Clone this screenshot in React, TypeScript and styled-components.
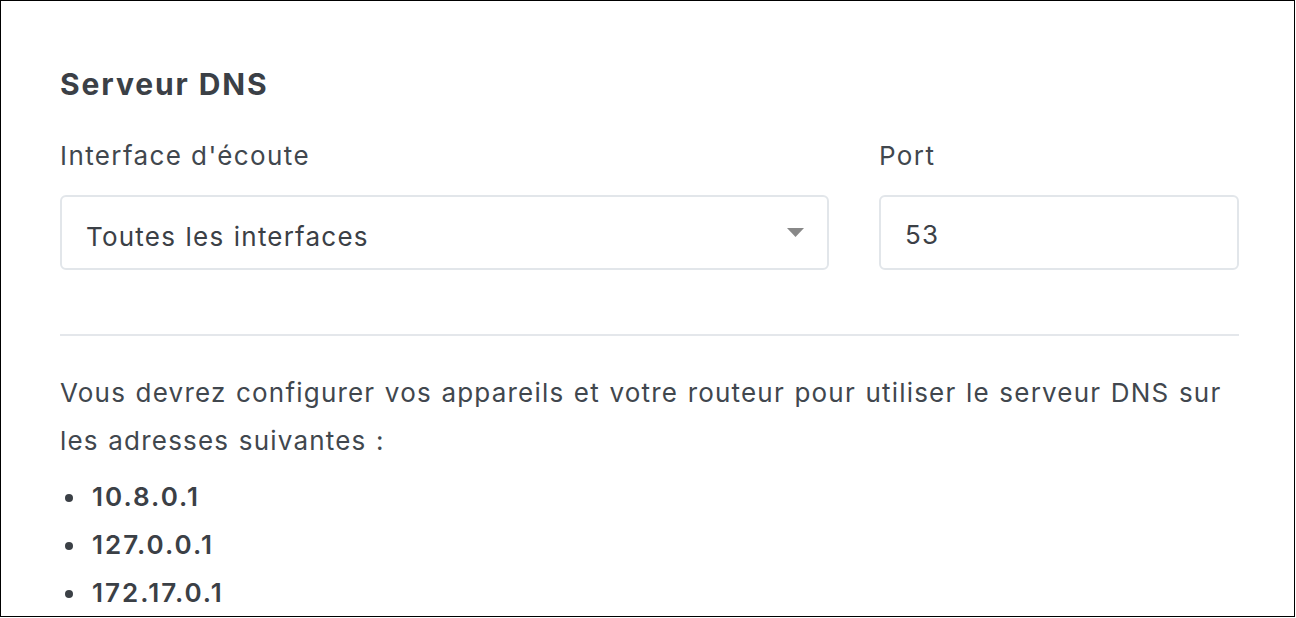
import React from "react";
import styled, { createGlobalStyle } from "styled-components";

const GlobalStyle = createGlobalStyle`
  html, body { margin: 0; padding: 0; background: #ffffff; }
  body { font-family: Inter, "Noto Sans", "Liberation Sans", sans-serif; }
  * { box-sizing: border-box; }
`;

const Frame = styled.div`
  width: 1295px;
  height: 617px;
  border: 1px solid #000000;
  background: #ffffff;
  overflow: hidden;
  padding: 65px 0 0 59px;
`;

const Section = styled.section`
  width: 1179px;
  color: #3f454c;
`;

const Title = styled.h2`
  margin: 0 0 36px;
  font-size: 30px;
  line-height: 36px;
  font-weight: 700;
  letter-spacing: 1.9px;
  color: #3b4046;
`;

const FieldRow = styled.div`
  display: flex;
  gap: 50px;
`;

const Field = styled.div<{ $width: number }>`
  width: ${(p) => p.$width}px;
  display: flex;
  flex-direction: column;
  gap: 21px;
`;

const Label = styled.label`
  font-size: 26px;
  line-height: 36px;
  letter-spacing: 1.4px;
  color: #41474e;
`;

const SelectWrap = styled.div`
  position: relative;
`;

const Select = styled.select`
  appearance: none;
  -webkit-appearance: none;
  width: 100%;
  height: 75px;
  border: 2px solid #e2e6ea;
  border-radius: 6px;
  background: #ffffff;
  padding: 8px 60px 0 24px;
  font: inherit;
  font-size: 26px;
  letter-spacing: 1.2px;
  word-spacing: 1px;
  color: #3b4046;
  outline: none;
`;

const Caret = styled.svg`
  position: absolute;
  right: 25px;
  top: 33px;
  width: 17px;
  height: 9px;
  pointer-events: none;
`;

const Input = styled.input`
  width: 100%;
  height: 75px;
  border: 2px solid #e2e6ea;
  border-radius: 6px;
  background: #ffffff;
  padding: 3px 24px 0;
  font: inherit;
  font-size: 26px;
  letter-spacing: 1.2px;
  color: #3b4046;
  outline: none;
`;

const Divider = styled.hr`
  margin: 64px 0 33px;
  border: none;
  height: 2px;
  background: #e4e7eb;
`;

const Paragraph = styled.p`
  margin: 0 0 8px;
  font-size: 26px;
  line-height: 48px;
  letter-spacing: 1.2px;
  word-spacing: 1px;
  color: #41474e;
`;

const AddressList = styled.ul`
  margin: 0;
  padding: 0;
  list-style: none;
`;

const Address = styled.li`
  display: flex;
  align-items: center;
  font-size: 26px;
  line-height: 48px;
  font-weight: 600;
  letter-spacing: 2px;
  color: #3b4046;

  &::before {
    content: "";
    width: 8px;
    height: 8px;
    border-radius: 50%;
    background: #3b4046;
    margin: 2px 19px 0 5px;
    flex: none;
  }
`;

const addresses = ["10.8.0.1", "127.0.0.1", "172.17.0.1"];

export default function App() {
  return (
    <>
      <GlobalStyle />
      <Frame>
        <Section>
          <Title>Serveur DNS</Title>
          <FieldRow>
            <Field $width={769}>
              <Label htmlFor="iface">Interface d'écoute</Label>
              <SelectWrap>
                <Select id="iface" defaultValue="all">
                  <option value="all">Toutes les interfaces</option>
                </Select>
                <Caret viewBox="0 0 17 9" aria-hidden="true">
                  <path d="M0 0 H17 L8.5 9 Z" fill="#888888" />
                </Caret>
              </SelectWrap>
            </Field>
            <Field $width={360}>
              <Label htmlFor="port">Port</Label>
              <Input id="port" defaultValue="53" />
            </Field>
          </FieldRow>
          <Divider />
          <Paragraph>
            Vous devrez configurer vos appareils et votre routeur pour utiliser le serveur DNS sur les adresses suivantes :
          </Paragraph>
          <AddressList>
            {addresses.map((a) => (
              <Address key={a}>{a}</Address>
            ))}
          </AddressList>
        </Section>
      </Frame>
    </>
  );
}
